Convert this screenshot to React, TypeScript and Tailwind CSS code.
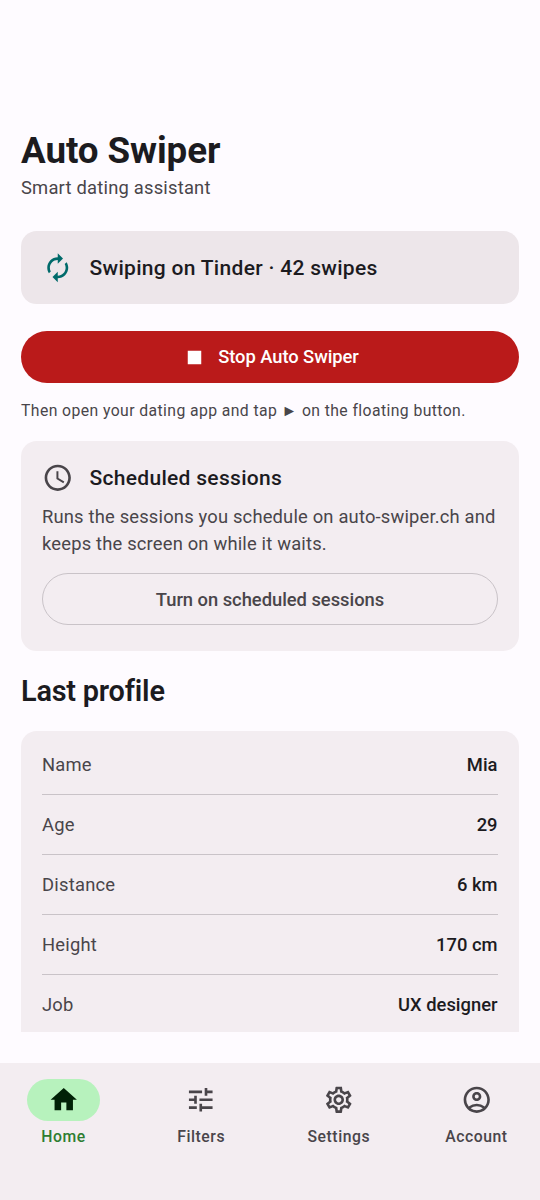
import type { IconType } from "react-icons";
import {
  MdAutorenew,
  MdHome,
  MdOutlineAccountCircle,
  MdOutlineSettings,
  MdSchedule,
  MdStop,
  MdTune,
} from "react-icons/md";
import clsx from "clsx";

interface ProfileField {
  label: string;
  value: string;
}

interface NavItemProps {
  label: string;
  icon: IconType;
  active?: boolean;
}

const profile: ProfileField[] = [
  { label: "Name", value: "Mia" },
  { label: "Age", value: "29" },
  { label: "Distance", value: "6 km" },
  { label: "Height", value: "170 cm" },
  { label: "Job", value: "UX designer" },
];

const navItems: NavItemProps[] = [
  { label: "Home", icon: MdHome, active: true },
  { label: "Filters", icon: MdTune },
  { label: "Settings", icon: MdOutlineSettings },
  { label: "Account", icon: MdOutlineAccountCircle },
];

function StatusCard() {
  return (
    <div className="mt-[29px] flex h-[73.5px] shrink-0 items-center gap-4 rounded-[15.75px] bg-[#ede6ea] px-[21px]">
      <MdAutorenew className="size-[31.5px] text-[#006a6a]" />
      <span className="pt-[2.5px] text-[21px] leading-[31.5px] font-medium tracking-[0.3px]">
        Swiping on Tinder · 42 swipes
      </span>
    </div>
  );
}

function ScheduledCard() {
  return (
    <section className="mt-5 shrink-0 rounded-[15.75px] bg-[#f3edf1] px-[21px] pt-[21px] pb-[26px]">
      <div className="flex items-center gap-4">
        <MdSchedule className="size-[31.5px] text-[#49454a]" />
        <h2 className="pt-px text-[21px] leading-[31px] font-medium tracking-[0.3px]">
          Scheduled sessions
        </h2>
      </div>
      <p className="mt-[10.5px] text-[18.375px] leading-[26.5px] tracking-[0.18px] text-[#49454a]">
        Runs the sessions you schedule on auto-swiper.ch and keeps the screen on
        while it waits.
      </p>
      <button className="mt-[15.5px] flex h-[52.5px] w-full items-center justify-center rounded-full border border-[#c9c3c8] pt-px text-[18.375px] font-medium tracking-[-0.03px] text-[#49454a]">
        Turn on scheduled sessions
      </button>
    </section>
  );
}

function NavItem({ label, icon: Icon, active }: NavItemProps) {
  return (
    <button className="flex flex-1 flex-col items-center">
      <span
        className={clsx(
          "flex h-[42px] w-[73.5px] items-center justify-center rounded-full",
          active ? "bg-[#b7f2bd] text-[#002106]" : "text-[#49454a]",
        )}
      >
        <Icon className="size-[31.5px]" />
      </span>
      <span
        className={clsx(
          "mt-[5.25px] text-[15.75px] leading-[21px] font-medium tracking-[0.55px]",
          active ? "text-[#2e7d32]" : "text-[#49454a]",
        )}
      >
        {label}
      </span>
    </button>
  );
}

export default function App() {
  return (
    <div className="flex h-[1200px] w-[540px] flex-col bg-[#fefbff] font-[Roboto,sans-serif] text-[#1c1b1f]">
      <main className="flex h-[1032px] shrink-0 flex-col overflow-hidden px-[21px] pt-[127px]">
        <h1 className="text-[36.75px] leading-[47.25px] font-bold tracking-[-0.08px]">
          Auto Swiper
        </h1>
        <p className="mt-px text-[18.375px] leading-[26.25px] tracking-[0.21px] text-[#49454a]">
          Smart dating assistant
        </p>

        <StatusCard />

        <button className="mt-[26.5px] flex h-[52.5px] shrink-0 items-center justify-center gap-[10px] rounded-full bg-[#ba1a1a] pt-px text-[18.375px] font-medium tracking-[-0.06px] text-white">
          <MdStop className="size-[27px]" />
          Stop Auto Swiper
        </button>
        <p className="mt-[16.75px] text-[15.75px] leading-[21px] tracking-[0.41px] text-[#49454a]">
          Then open your dating app and tap ► on the floating button.
        </p>

        <ScheduledCard />

        <h2 className="mt-[21.5px] text-[28.875px] leading-[36.75px] font-semibold tracking-[-0.2px]">
          Last profile
        </h2>

        {/* Profile details, runs on below the fold */}
        <section className="mt-[21px] shrink-0 rounded-[15.75px] bg-[#f3edf1] px-[21px] pt-[4px] pb-4">
          {profile.map((field) => (
            <div
              key={field.label}
              className="flex h-[60px] items-center justify-between border-b border-[#c9c3c8] pt-[2px] text-[18.375px] leading-[26.25px]"
            >
              <span className="tracking-[0.23px] text-[#49454a]">
                {field.label}
              </span>
              <span className="pr-[0.5px] font-medium">{field.value}</span>
            </div>
          ))}
        </section>
      </main>

      <nav className="mt-[31px] flex flex-1 items-start gap-[10.5px] bg-[#f3edf1] pt-4">
        {navItems.map((item) => (
          <NavItem key={item.label} {...item} />
        ))}
      </nav>
    </div>
  );
}
